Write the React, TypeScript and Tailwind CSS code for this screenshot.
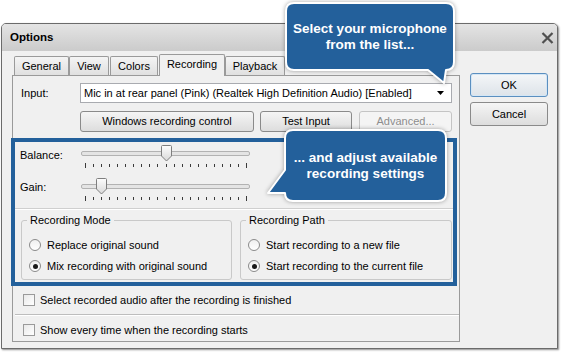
import React from "react";

const Button = ({
  children,
  className = "",
  disabled = false,
  primary = false,
}: {
  children: React.ReactNode;
  className?: string;
  disabled?: boolean;
  primary?: boolean;
}) => {
  return (
    <div
      className={
        "flex items-center justify-center rounded-[3px] border " +
        (disabled
          ? "border-[#c4c4c4] bg-[#f4f4f4] text-[#8d8d8d] "
          : primary
          ? "border-[#5b8fc0] bg-linear-to-b from-[#f4f6f8] to-[#dde3e9] shadow-[inset_0_0_0_1px_#d4e6f5] "
          : "border-[#8a8a8a] bg-linear-to-b from-[#f5f5f5] to-[#dddddd] ") +
        className
      }
    >
      {children}
    </div>
  );
};

const Slider = ({ pos, id }: { pos: number; id: string }) => {
  const x = 4 + pos * 8.05;
  return (
    <div className="relative w-[170px] h-[24px]">
      <div className="absolute left-0 w-[169px] top-[6px] h-[5px] rounded-[2px] border border-[#b2b2b2] bg-[#e4e4e4]" />
      <svg className="absolute left-0 top-[18px]" width="170" height="6">
        {Array.from({ length: 21 }).map((_, i) => {
          const tx = Math.round(4 + i * 8.05) + 0.5;
          const end = i === 0 || i === 20;
          return (
            <line
              key={i}
              x1={tx}
              x2={tx}
              y1={end ? 0 : 1}
              y2={end ? 5 : 4}
              stroke="#3a3a3a"
              strokeWidth="1"
            />
          );
        })}
      </svg>
      <svg
        className="absolute top-0"
        style={{ left: x - 5 }}
        width="11"
        height="17"
      >
        <defs>
          <linearGradient id={id} x1="0" y1="0" x2="0" y2="1">
            <stop offset="0" stopColor="#fdfdfd" />
            <stop offset="1" stopColor="#d8d8d8" />
          </linearGradient>
        </defs>
        <path
          d="M1.5 0.5 H9.5 Q10.5 0.5 10.5 1.5 V11 L5.5 16 L0.5 11 V1.5 Q0.5 0.5 1.5 0.5 Z"
          fill={`url(#${id})`}
          stroke="#7e7e7e"
        />
      </svg>
    </div>
  );
};

const Radio = ({ label, checked }: { label: string; checked?: boolean }) => {
  return (
    <div className="flex items-center h-[14px] gap-[6px]">
      <div className="w-[12px] h-[12px] rounded-full border border-[#8a8a8a] bg-linear-to-b from-[#f0f0f0] to-white flex items-center justify-center">
        {checked && <div className="w-[5px] h-[5px] rounded-full bg-[#1a1a1a]" />}
      </div>
      <span>{label}</span>
    </div>
  );
};

const Checkbox = ({ label }: { label: string }) => {
  return (
    <div className="flex items-center h-[14px] gap-[5px] ml-[2px]">
      <div className="w-[12px] h-[12px] border border-[#9a9a9a] bg-linear-to-br from-[#e9e9e9] to-white" />
      <span>{label}</span>
    </div>
  );
};

const Group = ({
  title,
  children,
  className = "",
}: {
  title: string;
  children: React.ReactNode;
  className?: string;
}) => {
  return (
    <fieldset
      className={
        "border border-[#c9c9c9] rounded-[3px] pl-[7px] pb-[6px] " + className
      }
    >
      <legend className="-ml-[2px] px-[3px] leading-[13px]">{title}</legend>
      <div className="flex flex-col gap-[7px] pt-[11px]">{children}</div>
    </fieldset>
  );
};

const Callout = ({
  text,
  path,
  svgClass,
  boxClass,
  w,
  h,
}: {
  text: string[];
  path: string;
  svgClass: string;
  boxClass: string;
  w: number;
  h: number;
}) => {
  return (
    <>
      <svg
        className={"absolute drop-shadow-[0_0_2px_rgba(0,0,0,0.35)] " + svgClass}
        width={w}
        height={h}
      >
        <path d={path} fill="#23609b" stroke="white" strokeWidth="2" strokeLinejoin="round" />
      </svg>
      <div
        className={
          "absolute flex flex-col items-center justify-center text-white font-bold text-[13.5px] leading-[16px] " +
          boxClass
        }
      >
        {text.map((t) => (
          <div key={t}>{t}</div>
        ))}
      </div>
    </>
  );
};

const tabs = [
  { name: "General", w: "w-[55px]", ml: "" },
  { name: "View", w: "w-[40px]", ml: "" },
  { name: "Colors", w: "w-[48px]", ml: "ml-[1px]" },
  { name: "Recording", w: "w-[66px]", ml: "ml-[1px]", active: true },
  { name: "Playback", w: "w-[60px]", ml: "" },
];

export default function App() {
  return (
    <div className="relative w-[563px] h-[354px] overflow-hidden bg-white text-[11px] leading-[13px] text-black font-['Liberation_Sans',Arial,sans-serif]">
      <div className="pt-[23px] pl-[1px]">
        <div className="w-[557px] h-[326px] rounded-t-[5px] border border-[#6b6b6b] bg-[#f0f0f0] shadow-[1px_1px_2px_rgba(0,0,0,0.45)] flex flex-col">
          {/* title bar */}
          <div className="h-[27px] rounded-t-[4px] bg-linear-to-b from-[#e4e4e4] to-[#cbcbcb] flex items-center justify-between pl-[8px] pr-[2px]">
            <span className="font-bold text-[11.5px]">Options</span>
            <svg width="13" height="12" className="mr-[1px]">
              <path d="M1.5 1 L11.5 11 M11.5 1 L1.5 11" stroke="#505050" strokeWidth="2.2" />
            </svg>
          </div>

          <div className="flex pl-[10px] pt-[3px]">
            {/* tab control */}
            <div className="w-[448px] flex flex-col">
              <div className="flex items-end h-[21px] pl-[2px]">
                {tabs.map((t) =>
                  t.active ? (
                    <div
                      key={t.name}
                      className={
                        "relative z-10 -mb-[1px] h-[22px] pb-[3px] flex items-center justify-center rounded-t-[2px] border border-b-0 border-[#9a9a9a] bg-[#f0f0f0] " +
                        t.w +
                        " " +
                        t.ml
                      }
                    >
                      {t.name}
                    </div>
                  ) : (
                    <div
                      key={t.name}
                      className={
                        "h-[19px] flex items-center justify-center rounded-t-[2px] border border-b-0 border-[#9a9a9a] bg-linear-to-b from-[#f4f4f4] to-[#e0e0e0] " +
                        t.w +
                        " " +
                        t.ml
                      }
                    >
                      {t.name}
                    </div>
                  )
                )}
              </div>
              <div className="h-[267px] border border-[#9a9a9a] bg-[#f0f0f0] pl-[8px] pr-[7px] pt-[7px]">
                {/* input */}
                <div className="flex items-center">
                  <span className="w-[59px]">Input:</span>
                  <div className="flex-1 h-[20px] border border-[#a9abb0] bg-white flex items-center justify-between pl-[3px] pr-[7px]">
                    <span>Mic in at rear panel (Pink) (Realtek High Definition Audio) [Enabled]</span>
                    <svg width="7" height="4">
                      <path d="M0 0 H7 L3.5 4 Z" fill="#000" />
                    </svg>
                  </div>
                </div>
                {/* buttons */}
                <div className="flex mt-[8px] ml-[59px] h-[21px]">
                  <Button className="w-[174px]">Windows recording control</Button>
                  <Button className="w-[92px] ml-[6px]">Test Input</Button>
                  <Button className="w-[93px] ml-[7px]" disabled>
                    Advanced...
                  </Button>
                </div>
                {/* highlighted area */}
                <div className="-ml-[10px] mt-[6px] w-[446px] h-[148px] border-[4px] border-[#23609b] flex flex-col">
                  <div className="flex items-start mt-[3px] pl-[5px]">
                    <span className="w-[61px] pt-[4px]">Balance:</span>
                    <Slider pos={10} id="thumbA" />
                  </div>
                  <div className="flex items-start mt-[9px] pl-[5px]">
                    <span className="w-[61px] pt-[3px]">Gain:</span>
                    <Slider pos={2} id="thumbB" />
                  </div>
                  <div className="mt-[6px] border-t border-[#cfcfcf] border-b border-b-white" />
                  <div className="flex mt-[4px] pl-[6px] gap-[8px]">
                    <Group title="Recording Mode" className="w-[211px]">
                      <Radio label="Replace original sound" />
                      <Radio label="Mix recording with original sound" checked />
                    </Group>
                    <Group title="Recording Path" className="w-[212px]">
                      <Radio label="Start recording to a new file" />
                      <Radio label="Start recording to the current file" checked />
                    </Group>
                  </div>
                </div>
                <div className="mt-[7px]">
                  <Checkbox label="Select recorded audio after the recording is finished" />
                </div>
                <div className="mt-[7px] -ml-[6px] -mr-[7px] border-t border-[#bdbdbd] border-b border-b-white" />
                <div className="mt-[7px]">
                  <Checkbox label="Show every time when the recording starts" />
                </div>
              </div>
            </div>

            {/* right buttons */}
            <div className="ml-[10px] w-[78px] pt-[19px] flex flex-col gap-[5px]">
              <Button className="h-[24px]" primary>
                OK
              </Button>
              <Button className="h-[24px]">Cancel</Button>
            </div>
          </div>
        </div>
      </div>

      <Callout
        text={["Select your microphone", "from the list..."]}
        path="M10 2 H162 Q170 2 170 10 V61 Q170 69 162 69 L160 82 L144 69 H10 Q2 69 2 61 V10 Q2 2 10 2 Z"
        svgClass="left-[284px] top-[1px]"
        boxClass="left-[286px] top-[3px] w-[168px] h-[67px]"
        w={174}
        h={86}
      />
      <Callout
        text={["... and adjust available", "recording settings"]}
        path="M29 2 H174 Q182 2 182 10 V65 Q182 73 174 73 H29 Q21 73 21 65 L4 65 L21 42 V10 Q21 2 29 2 Z"
        svgClass="left-[264px] top-[128px]"
        boxClass="left-[285px] top-[130px] w-[161px] h-[71px]"
        w={186}
        h={78}
      />
    </div>
  );
}
